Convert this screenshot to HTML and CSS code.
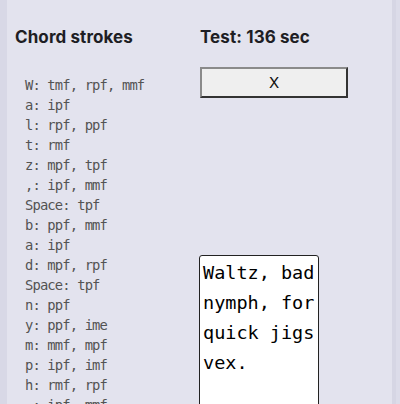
FILE: index.html
```html
<!DOCTYPE html>
<html>
<head>
<meta charset="utf-8">
<link rel="stylesheet" href="styles.css">
</head>
<body>
<div class="frame">
  <div class="strip-left"></div>
  <main class="main">
    <section class="col-left">
      <h2 class="title">Chord strokes</h2>
      <pre class="strokes">W: tmf, rpf, mmf
a: ipf
l: rpf, ppf
t: rmf
z: mpf, tpf
,: ipf, mmf
Space: tpf
b: ppf, mmf
a: ipf
d: mpf, rpf
Space: tpf
n: ppf
y: ppf, ime
m: mmf, mpf
p: ipf, imf
h: rmf, rpf
,: ipf, mmf
Space: tpf
f: tmf, ppf</pre>
    </section>
    <section class="col-right">
      <h2 class="title">Test: 136 sec</h2>
      <button class="stop">X</button>
      <textarea class="typing" spellcheck="false">Waltz, bad nymph, for quick jigs vex.</textarea>
    </section>
  </main>
  <div class="strip-right"></div>
</div>
</body>
</html>
```

FILE: styles.css
```css
html, body {
  margin: 0;
  padding: 0;
  height: 404px;
  overflow: hidden;
  background: #e3e3ee;
}

.frame {
  display: flex;
  height: 404px;
  overflow: hidden;
}

.strip-left {
  width: 7px;
  background: #d8d8e6;
  flex: none;
}

.strip-right {
  width: 8px;
  flex: none;
  background: linear-gradient(to right, #d6d6e4 0 4px, #dcdce9 4px 8px);
}

.main {
  flex: 1;
  display: grid;
  grid-template-columns: 185px 1fr;
  padding-left: 8px;
  overflow: hidden;
}

.title {
  margin: 0;
  padding-top: 26px;
  font-family: Inter, "Liberation Sans", sans-serif;
  font-weight: 700;
  font-size: 17px;
  line-height: 22px;
  color: #1e1e24;
  letter-spacing: 0.1px;
  white-space: nowrap;
}

.strokes {
  margin: 27px 0 0 10px;
  font-family: "DejaVu Sans Mono", monospace;
  font-size: 13.8px;
  letter-spacing: -0.85px;
  line-height: 20px;
  color: #535353;
}

.col-right {
  display: flex;
  flex-direction: column;
  align-items: flex-start;
}

.stop {
  margin-top: 19px;
  width: 148px;
  height: 31px;
  background: #efefef;
  border: 2px solid;
  border-color: #8a8a8a #333 #333 #8a8a8a;
  font-family: Inter, "Liberation Sans", sans-serif;
  font-size: 15px;
  color: #111;
  padding: 0;
}

.typing {
  margin: 157px 0 0 -1px;
  width: 120px;
  height: 200px;
  flex: none;
  box-sizing: border-box;
  padding: 2px 1px 2px 3px;
  border: 1px solid #222;
  border-radius: 3px;
  background: #fff;
  font-family: "DejaVu Sans Mono", monospace;
  font-size: 18.5px;
  line-height: 30px;
  color: #000;
  resize: none;
  overflow: hidden;
  outline: none;
}
```
